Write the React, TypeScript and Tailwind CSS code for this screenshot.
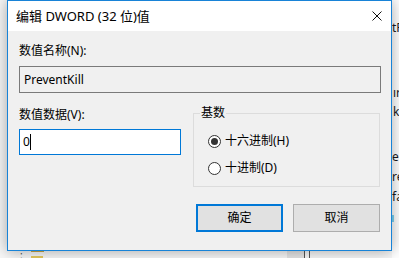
import React from "react";

const F = "font-['Noto_Sans','Noto_Sans_CJK_SC',sans-serif]";

function Radio({ checked, label }: { checked?: boolean; label: string }) {
  return (
    <div className="flex items-center h-[16px]">
      <div className="w-[13px] h-[13px] rounded-full border border-[#333] bg-white flex items-center justify-center">
        {checked && <div className="w-[7px] h-[7px] rounded-full bg-[#333]" />}
      </div>
      <span className="ml-[4px] text-[12px] leading-[16px] text-black">{label}</span>
    </div>
  );
}

export default function App() {
  return (
    <div className={`relative w-[399px] h-[258px] overflow-hidden bg-[#f7f7f7] ${F}`}>
      {/* background window fragments */}
      <div className="absolute left-[392px] top-0 w-[7px] h-[258px] bg-white text-[12px] leading-[16px] text-[#1a1a1a]">
        <div className="absolute top-[20px] left-[0px]">tP</div>
        <div className="absolute top-[85px] left-[1px]">ır</div>
        <div className="absolute top-[104px] left-[1px]">k</div>
        <div className="absolute top-[149px] left-[0px]">e</div>
        <div className="absolute top-[169px] left-[0px]">re</div>
        <div className="absolute top-[189px] left-[0px]">fa</div>
        <div className="absolute top-[215px] left-[0px] w-[2px] h-[7px] bg-[#7fd4f0]" />
      </div>
      <div className="absolute left-[20px] top-[252px] text-[10px] leading-[6px] text-[#444]">:</div>
      <div className="absolute left-[31px] top-[250px] w-[13px] h-[2px] bg-[#c8a74a]" />
      <div className="absolute left-[31px] top-[256px] w-[12px] h-[2px] bg-[#e6c95e]" />
      <div className="absolute left-[287px] top-[251px] w-[17px] h-[7px] bg-[#e4e4e4]" />
      <div className="absolute left-[304px] top-[251px] w-[1px] h-[7px] bg-[#555]" />
      <div className="absolute left-[309px] top-[251px] w-[1px] h-[7px] bg-[#555]" />

      {/* dialog window */}
      <div className="absolute left-[7px] top-0 w-[385px] h-[251px] border border-[#1883d7] bg-[#f0f0f0] shadow-[0_0_14px_rgba(0,0,0,0.35)] flex flex-col">
        <div className="h-[30px] bg-white flex items-center justify-between pl-[8px] pr-[9px]">
          <span className="text-[13px] leading-[16px] text-black">编辑 DWORD (32 位)值</span>
          <svg width="10" height="10" viewBox="0 0 10 10" className="block">
            <path d="M0.5 0.5 L9.5 9.5 M9.5 0.5 L0.5 9.5" stroke="#111" strokeWidth="1" fill="none" />
          </svg>
        </div>
        <div className="flex flex-col px-[11px]">
          <div className="mt-[12px] text-[12px] leading-[16px] text-black">数值名称(N):</div>
          <div className="mt-[7px] h-[27px] w-[362px] border border-[#7a7a7a] bg-[#f0f0f0] flex items-center pl-[4px] text-[12px] text-black">
            PreventKill
          </div>
          <div className="flex mt-[14px]">
            <div className="w-[162px] flex flex-col">
              <div className="mt-[0px] text-[12px] leading-[16px] text-black">数值数据(V):</div>
              <div className="mt-[6px] h-[26px] w-[162px] border border-[#0078d7] bg-white flex items-center pl-[3px] text-[12px] text-black">
                <span>0</span>
                <span className="w-[1px] h-[16px] bg-black" />
              </div>
            </div>
            <div className="ml-[12px] relative mt-[6px] w-[188px] h-[74px] border border-[#dcdcdc]">
              <div className="absolute left-[6px] top-[-9px] px-[1px] bg-[#f0f0f0] text-[12px] leading-[16px] text-black">基数</div>
              <div className="flex flex-col gap-[11px] pl-[14px] pt-[19px]">
                <Radio checked label="十六进制(H)" />
                <Radio label="十进制(D)" />
              </div>
            </div>
          </div>
          <div className="flex justify-end gap-[10px] mt-[17px]">
            <button className="w-[87px] h-[28px] border-2 border-[#0078d7] bg-[#e1e1e1] text-[12px] text-black">确定</button>
            <button className="w-[87px] h-[28px] border border-[#adadad] bg-[#e1e1e1] text-[12px] text-black">取消</button>
          </div>
        </div>
      </div>
    </div>
  );
}
